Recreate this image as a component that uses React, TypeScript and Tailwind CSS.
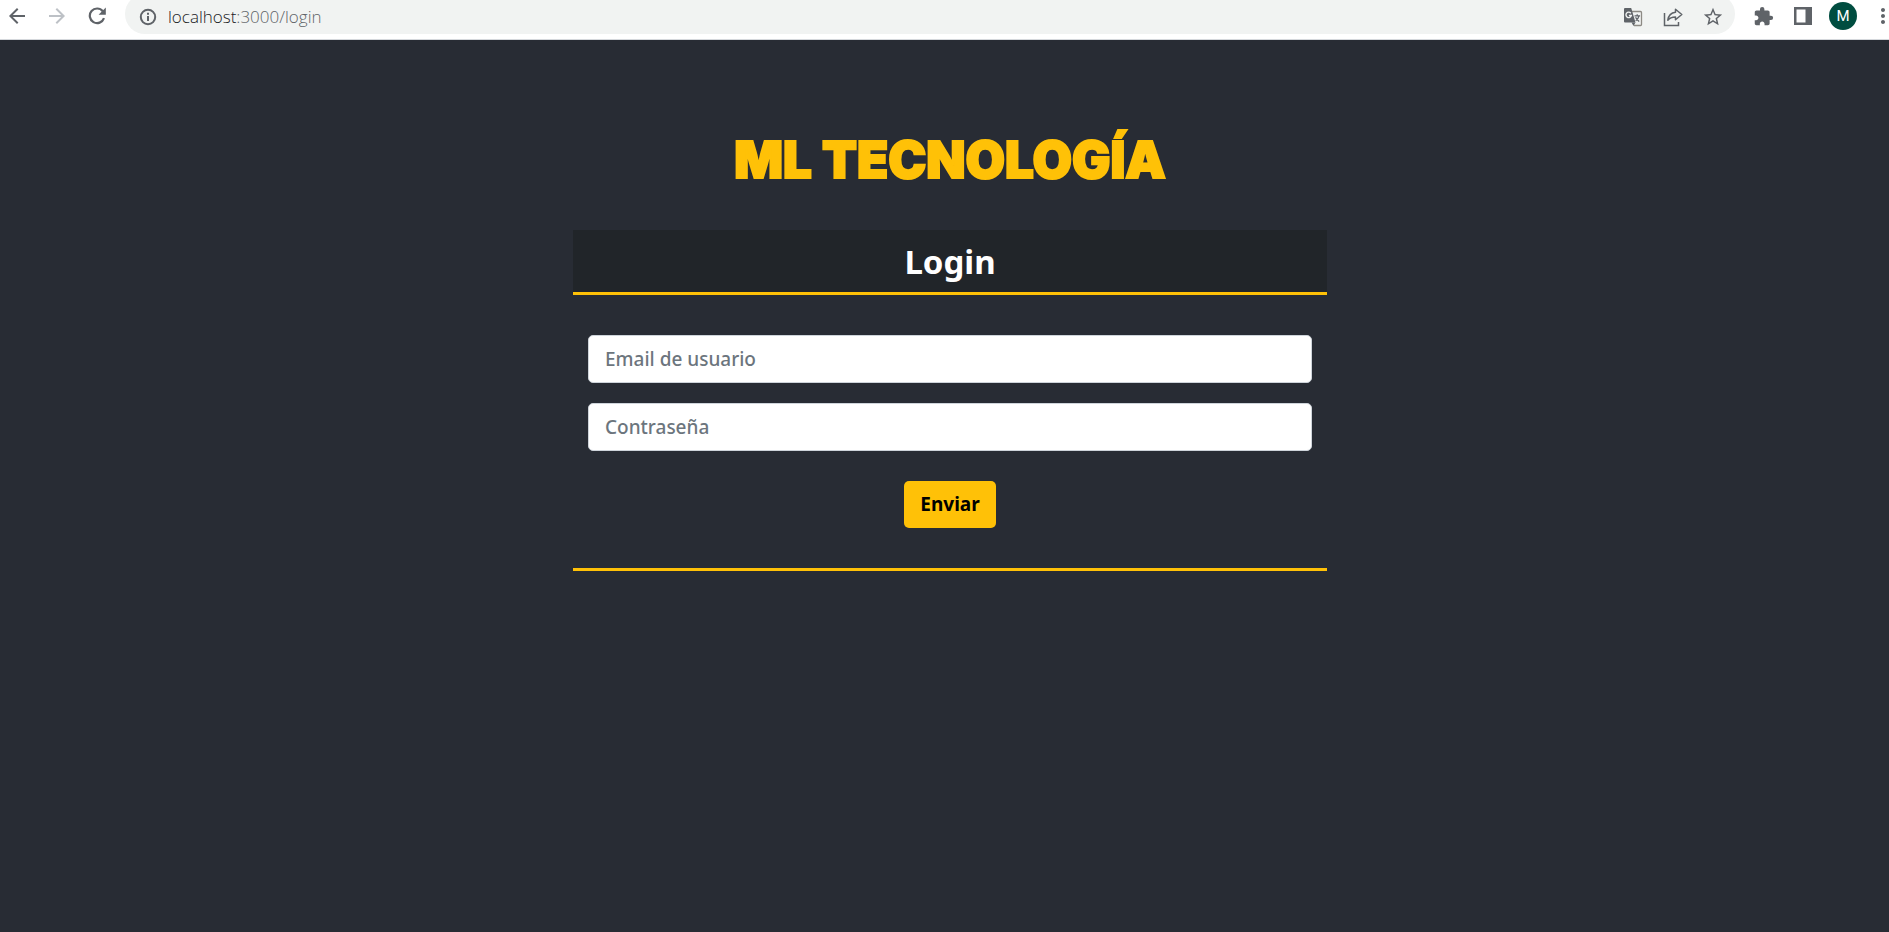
import React from "react";
import {
  MdArrowBack,
  MdArrowForward,
  MdExtension,
  MdMoreVert,
  MdStarBorder,
} from "react-icons/md";

function ReloadIcon() {
  return (
    <svg width="18" height="18" viewBox="0 0 18 18" fill="none" aria-hidden="true">
      <path d="M14.800 4.200A7.300 7.300 0 1 0 16 11.200" stroke="#5f6368" strokeWidth="2.200" />
      <path d="M17.800.6v7.200h-7.200z" fill="#5f6368" />
    </svg>
  );
}

function InfoIcon() {
  return (
    <svg width="18" height="18" viewBox="0 0 18 18" fill="none" stroke="#5f6368" strokeWidth="2" className="shrink-0" aria-hidden="true">
      <circle cx="9" cy="9" r="7.200" />
      <path d="M9 8v5M9 4.800v2" />
    </svg>
  );
}

function TranslateIcon() {
  return (
    <svg width="20" height="20" viewBox="0 0 20 20" fill="none" aria-hidden="true">
      <path d="M8 4.500h9.500a1 1 0 0 1 1 1v12a1 1 0 0 1-1 1H11" stroke="#8d8a84" strokeWidth="1.300" />
      <path d="M2 1h6.200l4.300 14.500H2a1 1 0 0 1-1-1V2a1 1 0 0 1 1-1z" fill="#5f6368" />
      <path d="M12.500 15.500 10.500 19l-2-3.500z" fill="#5f6368" />
      <path d="M7.800 6.200a2.700 2.700 0 1 0 .5 2.300H5.900" stroke="#f1f3f2" strokeWidth="1.400" />
      <path d="M11.500 8.800h5.600M14.200 7.300v1.500M16 8.800c-.4 2-1.800 3.800-3.300 4.900M12.600 10.200c.6 1.600 2 3.200 3.600 4.300" stroke="#5f6368" strokeWidth="1.200" />
    </svg>
  );
}

function ShareIcon() {
  return (
    <svg width="20" height="20" viewBox="0 0 20 20" fill="none" stroke="#5f6368" strokeWidth="1.500" aria-hidden="true">
      <path d="M1.500 6v12.500h14V15" />
      <path d="M12.500 2.200 18.800 7.500 12.500 12.800V9.900c-3.500 0-6 .9-7.700 3.300C5.400 9 8 5.800 12.500 5.300z" strokeLinejoin="round" />
    </svg>
  );
}

function SidePanelIcon() {
  return (
    <svg width="18" height="18" viewBox="0 0 18 18" aria-hidden="true">
      <path fillRule="evenodd" d="M0 0h18v18H0zM2.500 2.500v13h9v-13z" fill="#5f6368" />
    </svg>
  );
}

const iconButton = "flex size-7 shrink-0 items-center justify-center rounded-full text-[#5f6368]";

function BrowserBar() {
  return (
    <header className="flex h-10 items-start overflow-hidden border-b border-[#d5d8dc] bg-white pl-[3px]">
      <nav className="flex gap-3 pt-0.5">
        <button type="button" aria-label="Back" className={iconButton}>
          <MdArrowBack size={24} />
        </button>
        <button type="button" aria-label="Forward" className={iconButton}>
          <MdArrowForward size={24} color="#bdc1c6" />
        </button>
        <button type="button" aria-label="Reload" className={iconButton}>
          <ReloadIcon />
        </button>
      </nav>
      <div className="-mt-1.5 ml-3.5 flex h-10 min-w-0 flex-1 items-center rounded-full bg-[#f1f3f2] pt-1.5 pr-2 pl-3.5">
        <InfoIcon />
        <p className="ml-[11px] flex-1 font-['Open_Sans',sans-serif] text-[17px] leading-6 font-light text-[#5f6368]">
          <span className="text-[#202124]">localhost</span>:3000/login
        </p>
        <div className="flex gap-3">
          <button type="button" aria-label="Translate" className={iconButton}>
            <TranslateIcon />
          </button>
          <button type="button" aria-label="Share" className={iconButton}>
            <ShareIcon />
          </button>
          <button type="button" aria-label="Bookmark" className={iconButton}>
            <MdStarBorder size={22} />
          </button>
        </div>
      </div>
      <div className="flex shrink-0 items-center gap-3 pt-0.5 pl-3.5">
        <button type="button" aria-label="Extensions" className={iconButton}>
          <MdExtension size={21} />
        </button>
        <button type="button" aria-label="Side panel" className={iconButton}>
          <SidePanelIcon />
        </button>
        <button
          type="button"
          aria-label="Profile"
          className="flex size-7 items-center justify-center rounded-full bg-[#004d40] font-[Roboto,sans-serif] text-[15px] text-white"
        >
          M
        </button>
        <button type="button" aria-label="Menu" className="-mr-2 flex size-7 items-center justify-center text-[#5f6368]">
          <MdMoreVert size={24} />
        </button>
      </div>
    </header>
  );
}

const inputClass =
  "h-12 w-full rounded-[5px] border border-[#ced4da] bg-white px-4 text-[19px] font-medium text-[#212529] placeholder:text-[#6c757d]";

export default function App() {
  return (
    <div className="flex min-h-screen flex-col bg-[#282c34] font-['Noto_Sans',sans-serif]">
      <BrowserBar />
      <main className="flex flex-col items-center pt-[84px] pl-[11px]">
        <h1 className="font-[Inter,sans-serif] text-[51px] leading-[72px] font-black text-[#ffc107] [-webkit-text-stroke:2px_#ffc107]">
          ML TECNOLOGÍA
        </h1>
        <section className="mt-[34px] w-full max-w-[754px] border-b-[3px] border-[#ffc107]">
          <h2 className="border-b-[3px] border-[#ffc107] bg-[#212529] pt-[11px] pb-[9px] text-center text-[33px] leading-[42px] font-bold text-white">
            Login
          </h2>
          <form className="flex flex-col items-center px-[15px] pt-10 pb-10" onSubmit={(e) => e.preventDefault()}>
            <input type="email" aria-label="Email de usuario" placeholder="Email de usuario" className={inputClass} />
            <input type="password" aria-label="Contraseña" placeholder="Contraseña" className={`${inputClass} mt-5`} />
            <button
              type="submit"
              className="mt-[30px] h-[47px] rounded-[5px] bg-[#ffc107] px-4 text-[19px] font-bold text-black"
            >
              Enviar
            </button>
          </form>
        </section>
      </main>
    </div>
  );
}
